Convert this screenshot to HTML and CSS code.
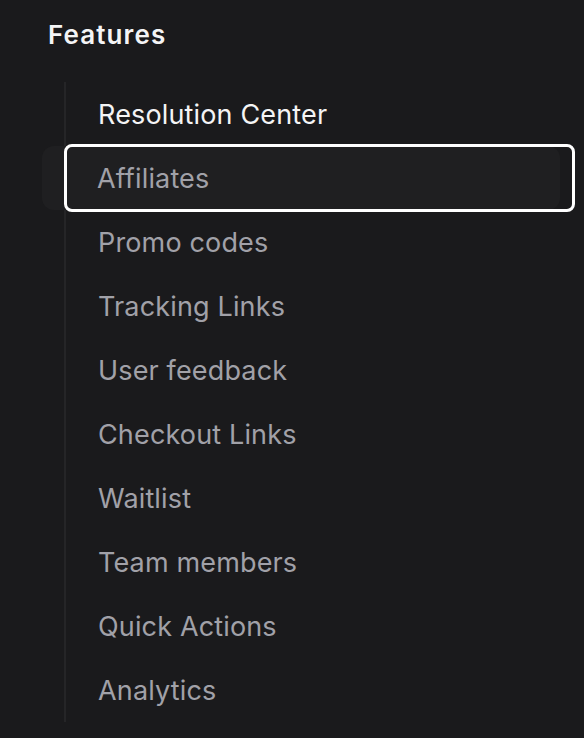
FILE: index.html
```html
<!DOCTYPE html>
<html>
<head>
<meta charset="utf-8">
<link rel="stylesheet" href="styles.css">
</head>
<body>
<div class="panel">
  <h2 class="title">Features</h2>
  <ul class="nav">
    <li class="item active-page">Resolution Center</li>
    <li class="item focused">Affiliates</li>
    <li class="item">Promo codes</li>
    <li class="item">Tracking Links</li>
    <li class="item">User feedback</li>
    <li class="item">Checkout Links</li>
    <li class="item">Waitlist</li>
    <li class="item">Team members</li>
    <li class="item">Quick Actions</li>
    <li class="item">Analytics</li>
  </ul>
</div>
</body>
</html>
```
FILE: styles.css
```css
html, body {
  margin: 0;
  padding: 0;
  background: #1a1a1c;
}
body {
  font-family: Inter, "Noto Sans", sans-serif;
  width: 584px;
  height: 738px;
  overflow: hidden;
}
.panel {
  padding: 19px 0 0 48px;
}
.title {
  margin: 0;
  font-size: 26px;
  font-weight: 600;
  letter-spacing: 1.1px;
  color: #f4f4f5;
  line-height: 32px;
  height: 63px;
}
.nav {
  list-style: none;
  margin: 0 0 0 16px;
  padding: 0;
  border-left: 2px solid #252527;
  width: 509px;
}
.item {
  position: relative;
  box-sizing: border-box;
  height: 64px;
  padding-top: 2px;
  line-height: 62px;
  padding-left: 32px;
  font-size: 27px;
  letter-spacing: 0.15px;
  color: #a1a1a8;
}
.active-page {
  color: #f4f4f5;
}
.focused {
  z-index: 0;
  padding-left: 31px;
}
.focused::before {
  content: "";
  position: absolute;
  left: -24px;
  right: 15px;
  top: 0;
  bottom: 0;
  background: #1f1f21;
  border-radius: 12px;
  z-index: -1;
}
.focused::after {
  content: "";
  position: absolute;
  left: -2px;
  right: 0;
  top: -2px;
  bottom: -2px;
  border: 3px solid #ffffff;
  border-radius: 8px;
}
```
